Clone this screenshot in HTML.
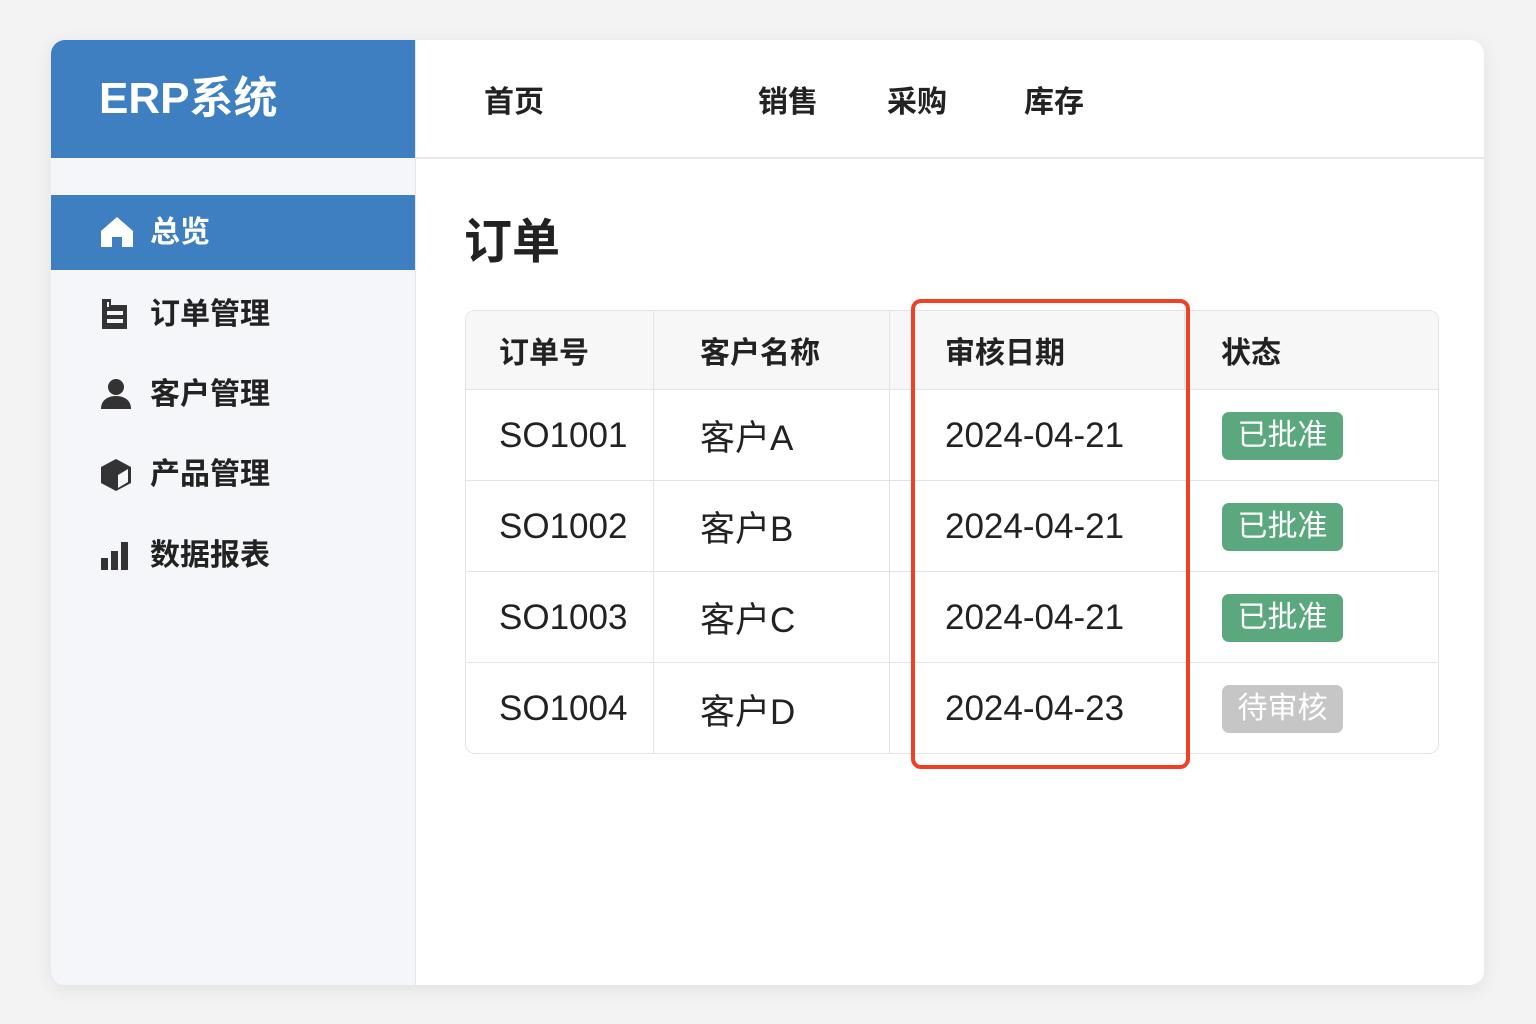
<!DOCTYPE html>
<html><head><meta charset="utf-8"><style>
*{margin:0;padding:0;box-sizing:border-box}
body{width:1536px;height:1024px;background:#f3f3f4;font-family:"Liberation Sans","Noto Sans CJK SC",sans-serif;color:#222;position:relative;overflow:hidden}
.card{position:absolute;left:51px;top:40px;width:1433px;height:945px;background:#fff;border-radius:14px;overflow:hidden;box-shadow:0 4px 18px rgba(0,0,0,.08)}
.side{position:absolute;left:0;top:0;width:365px;height:100%;background:#f4f6f9;border-right:1px solid #e3e6ea}
.logo{position:absolute;left:0;top:0;width:364px;height:118px;background:#3d7fc1;color:#fff;font-size:44px;font-weight:bold;padding-left:48px;line-height:118px}
.item{position:absolute;left:0;width:364px;height:75px;font-size:30px;font-weight:bold;line-height:75px;padding-left:99px;color:#222}
.item.act{background:#3d7fc1;color:#fff}
.item svg{position:absolute;left:48px;top:20px}
.nav{position:absolute;left:365px;top:0;right:0;height:119px;border-bottom:2px solid #e8e8e8}
.nav span{position:absolute;top:37px;font-size:30px;font-weight:bold}
h1{position:absolute;left:413px;top:162px;font-size:48px;font-weight:bold;color:#222}
.tbl{position:absolute;left:414px;top:270px;width:974px;height:444px;border:1px solid #e3e3e3;border-radius:10px;overflow:hidden}
.row{position:absolute;left:0;width:100%;border-top:1px solid #e3e3e3}
.c{position:absolute;top:0;height:100%;border-left:1px solid #e3e3e3;padding-left:33px;display:flex;align-items:center}
.hd{background:#f7f7f8;font-size:30px;font-weight:bold}
.bd{font-size:35px}
.badge{display:inline-block;width:121px;height:48px;border-radius:7px;background:#5ba87f;color:#fff;font-size:30px;text-align:center;line-height:48px}
.badge.g{background:#c6c6c6}
.red{position:absolute;left:860px;top:259px;width:279px;height:470px;border:4px solid #f04124;border-radius:10px}
</style></head><body>
<div class="card">
 <div class="side">
  <div class="logo">ERP系统</div>
  <div class="item act" style="top:155px"><svg width="36" height="34" viewBox="0 0 36 34"><path d="M18 2 L34 16 V32 H23 V22 H13 V32 H2 V16 Z" fill="#fff"/></svg>总览</div>
  <div class="item" style="top:237px"><svg width="32" height="34" viewBox="0 0 32 34"><path d="M3 2h9v6h16v24H3z" fill="#333"/><rect x="8" y="14" width="16" height="4" fill="#f4f6f9"/><rect x="8" y="22" width="16" height="4" fill="#f4f6f9"/><rect x="8" y="5" width="2" height="5" fill="#f4f6f9"/></svg>订单管理</div>
  <div class="item" style="top:317px"><svg width="34" height="34" viewBox="0 0 34 34"><circle cx="17" cy="10" r="8" fill="#333"/><path d="M2 32c0-9 7-13 15-13s15 4 15 13z" fill="#333"/></svg>客户管理</div>
  <div class="item" style="top:397px"><svg width="34" height="36" viewBox="0 0 34 36"><path d="M17 2 L32 10 V26 L17 34 L2 26 V10 Z" fill="#333"/><path d="M19 18 L29 12 V25 L19 31 Z" fill="#f4f6f9"/></svg>产品管理</div>
  <div class="item" style="top:478px"><svg width="32" height="34" viewBox="0 0 32 34"><rect x="2" y="20" width="7" height="12" fill="#333"/><rect x="12" y="13" width="7" height="19" fill="#333"/><rect x="22" y="4" width="7" height="28" fill="#333"/></svg>数据报表</div>
 </div>
 <div class="nav"><span style="left:68px">首页</span><span style="left:342px">销售</span><span style="left:471px">采购</span><span style="left:608px">库存</span></div>
 <h1>订单</h1>
 <div class="tbl">
  <div class="row hd" style="top:-1px;height:79px;border-top:none">
   <div class="c" style="left:0;border-left:none">订单号</div><div class="c" style="left:187px;padding-left:46px">客户名称</div><div class="c" style="left:423px;padding-left:55px">审核日期</div><div class="c" style="left:718px;padding-left:36px">状态</div>
  </div>
  <div class="row bd" style="top:78px;height:92px">
   <div class="c" style="left:0;border-left:none">SO1001</div><div class="c" style="left:187px;padding-left:46px">客户A</div><div class="c" style="left:423px;padding-left:55px">2024-04-21</div><div class="c" style="left:718px;padding-left:38px;border-left:none"><span class="badge">已批准</span></div>
  </div>
  <div class="row bd" style="top:169px;height:92px">
   <div class="c" style="left:0;border-left:none">SO1002</div><div class="c" style="left:187px;padding-left:46px">客户B</div><div class="c" style="left:423px;padding-left:55px">2024-04-21</div><div class="c" style="left:718px;padding-left:38px;border-left:none"><span class="badge">已批准</span></div>
  </div>
  <div class="row bd" style="top:260px;height:92px">
   <div class="c" style="left:0;border-left:none">SO1003</div><div class="c" style="left:187px;padding-left:46px">客户C</div><div class="c" style="left:423px;padding-left:55px">2024-04-21</div><div class="c" style="left:718px;padding-left:38px;border-left:none"><span class="badge">已批准</span></div>
  </div>
  <div class="row bd" style="top:351px;height:93px">
   <div class="c" style="left:0;border-left:none">SO1004</div><div class="c" style="left:187px;padding-left:46px">客户D</div><div class="c" style="left:423px;padding-left:55px">2024-04-23</div><div class="c" style="left:718px;padding-left:38px;border-left:none"><span class="badge g">待审核</span></div>
  </div>
 </div>
 <div class="red"></div>
</div>
</body></html>
